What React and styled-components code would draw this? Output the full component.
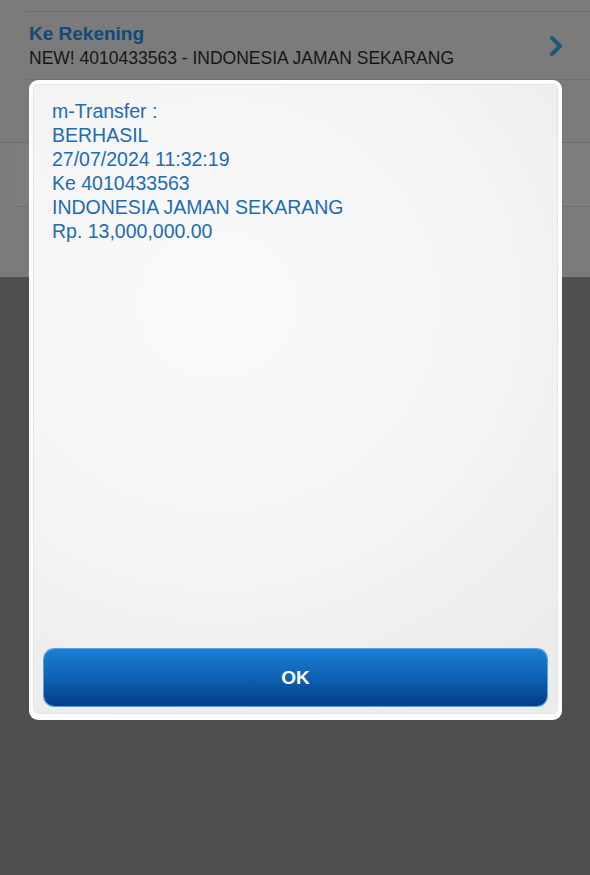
import React from "react";
import styled, { createGlobalStyle } from "styled-components";

const GlobalStyle = createGlobalStyle`
  html, body {
    margin: 0;
    padding: 0;
    background: #4f4f4f;
    font-family: "Liberation Sans", Arial, sans-serif;
  }
`;

const Screen = styled.div`
  position: relative;
  width: 590px;
  height: 875px;
  overflow: hidden;
  background: #4f4f4f;
`;

const Sheet = styled.div`
  height: 277px;
  background: #7b7b7b;
  padding-top: 11px;
  box-sizing: border-box;
`;

const AccountRow = styled.div`
  display: flex;
  align-items: center;
  justify-content: space-between;
  height: 69px;
  margin-left: 26px;
  padding: 0 26px 0 3px;
  border-top: 1px solid #6d6d6d;
  border-bottom: 1px solid #717171;
  box-sizing: border-box;
`;

const AccountText = styled.div`
  display: flex;
  flex-direction: column;
  gap: 3px;
  margin-top: -1px;
`;

const Label = styled.div`
  font-size: 19px;
  font-weight: 700;
  color: #0f4a78;
  line-height: 23px;
`;

const Value = styled.div`
  font-size: 17.5px;
  color: #161616;
  line-height: 21px;
`;

const FieldRow = styled.div`
  height: ${(p) => p.$h}px;
  margin-left: ${(p) => p.$inset}px;
  background: ${(p) => p.$bg};
  border-bottom: 1px solid #6f6f6f;
  box-sizing: border-box;
`;

const Dialog = styled.div`
  position: absolute;
  left: 29px;
  top: 80px;
  width: 533px;
  height: 640px;
  padding: 4px 4px 6px 4px;
  box-sizing: border-box;
  background: #fdfdfd;
  border-radius: 9px;
`;

const Panel = styled.div`
  height: 100%;
  display: flex;
  flex-direction: column;
  border-radius: 6px;
  background: radial-gradient(
    ellipse 90% 70% at 35% 35%,
    #fafafa 0%,
    #f4f4f4 60%,
    #ececec 100%
  );
  box-shadow: inset 0 0 0 1px #e4e4e4;
`;

const Message = styled.div`
  flex: 1;
  padding: 15px 19px 0 19px;
  font-size: 19.5px;
  line-height: 24px;
  color: #1f6cb1;
`;

const OkButton = styled.button`
  margin: 0 11px 8px 11px;
  height: 57px;
  border: none;
  border-radius: 10px;
  background: linear-gradient(180deg, #1b7fd3 0%, #0f66b8 45%, #003d88 100%);
  color: #ffffff;
  font-family: "Liberation Sans", Arial, sans-serif;
  font-size: 19px;
  font-weight: 700;
  box-shadow: 0 0 0 1px #5fa2da;
`;

const lines = [
  "m-Transfer :",
  "BERHASIL",
  "27/07/2024 11:32:19",
  "Ke 4010433563",
  "INDONESIA JAMAN SEKARANG",
  "Rp. 13,000,000.00",
];

const Chevron = () => (
  <svg width="16" height="22" viewBox="0 0 16 22">
    <path
      d="M4 3 L12 11 L4 19"
      fill="none"
      stroke="#1b5a7c"
      strokeWidth="4"
      strokeLinecap="round"
      strokeLinejoin="round"
    />
  </svg>
);

export default function App() {
  return (
    <>
      <GlobalStyle />
      <Screen>
        <Sheet>
          <AccountRow>
            <AccountText>
              <Label>Ke Rekening</Label>
              <Value>NEW! 4010433563 - INDONESIA JAMAN SEKARANG</Value>
            </AccountText>
            <Chevron />
          </AccountRow>
          <FieldRow $h={63} $inset={0} $bg="#7b7b7b" />
          <FieldRow $h={64} $inset={16} $bg="#7d7d7d" />
        </Sheet>
        <Dialog>
          <Panel>
            <Message>
              {lines.map((l) => (
                <div key={l}>{l}</div>
              ))}
            </Message>
            <OkButton>OK</OkButton>
          </Panel>
        </Dialog>
      </Screen>
    </>
  );
}
